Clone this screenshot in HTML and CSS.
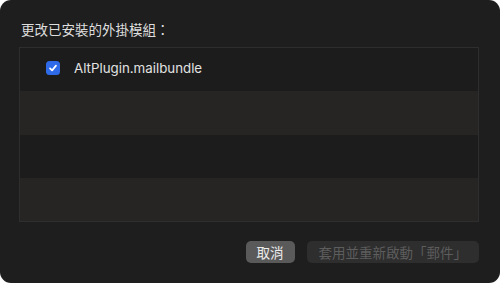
FILE: index.html
```html
<!DOCTYPE html>
<html lang="zh-Hant">
<head>
<meta charset="utf-8">
<link rel="stylesheet" href="styles.css">
</head>
<body>
<div class="window">
  <div class="title">更改已安裝的外掛模組：</div>
  <div class="list">
    <div class="row">
      <span class="check">
        <svg width="10" height="10" viewBox="0 0 10 10"><path d="M2 5.3 L4.1 7.4 L8 2.6" fill="none" stroke="#fff" stroke-width="1.7" stroke-linecap="round" stroke-linejoin="round"/></svg>
      </span>
      <span class="name">AltPlugin.mailbundle</span>
    </div>
    <div class="row alt"></div>
    <div class="row"></div>
    <div class="row alt"></div>
  </div>
  <div class="actions">
    <button class="btn cancel">取消</button>
    <button class="btn disabled">套用並重新啟動「郵件」</button>
  </div>
</div>
</body>
</html>
```
FILE: styles.css
```css
html, body {
  margin: 0;
  padding: 0;
  background: #ffffff;
}
body {
  width: 500px;
  height: 283px;
  overflow: hidden;
  font-family: Inter, "Noto Sans CJK TC", sans-serif;
}
.window {
  width: 500px;
  height: 283px;
  box-sizing: border-box;
  background: #1e1e1e;
  border-radius: 11px;
  padding: 20px 21px 0 19px;
  display: flex;
  flex-direction: column;
}
.title {
  font-family: "Noto Sans CJK TC", sans-serif;
  font-size: 13.5px;
  line-height: 19px;
  color: #dedede;
  padding-left: 2px;
  margin-bottom: 8px;
}
.list {
  border: 1px solid #2e2e2e;
  display: flex;
  flex-direction: column;
}
.row {
  height: 43.25px;
  background: #1c1c1c;
  display: flex;
  align-items: center;
  padding-left: 26px;
}
.row.alt {
  background: #262523;
}
.check {
  width: 14px;
  height: 14px;
  border-radius: 3.5px;
  background: #2f6ae8;
  display: flex;
  align-items: center;
  justify-content: center;
  margin-right: 14px;
  margin-top: -4px;
}
.name {
  font-size: 13.3px;
  color: #e2e2e2;
  margin-top: -4px;
}
.actions {
  display: flex;
  justify-content: flex-end;
  gap: 12px;
  margin-top: 19px;
}
.btn {
  font-family: "Noto Sans CJK TC", sans-serif;
  font-size: 13.5px;
  height: 22px;
  line-height: 22px;
  border: none;
  border-radius: 5px;
  padding: 0 11px;
  margin: 0;
}
.cancel {
  background: #5a5a5a;
  color: #ececec;
}
.disabled {
  background: #2e2e2e;
  color: #5d5d5d;
  padding: 0 12px;
}
```
